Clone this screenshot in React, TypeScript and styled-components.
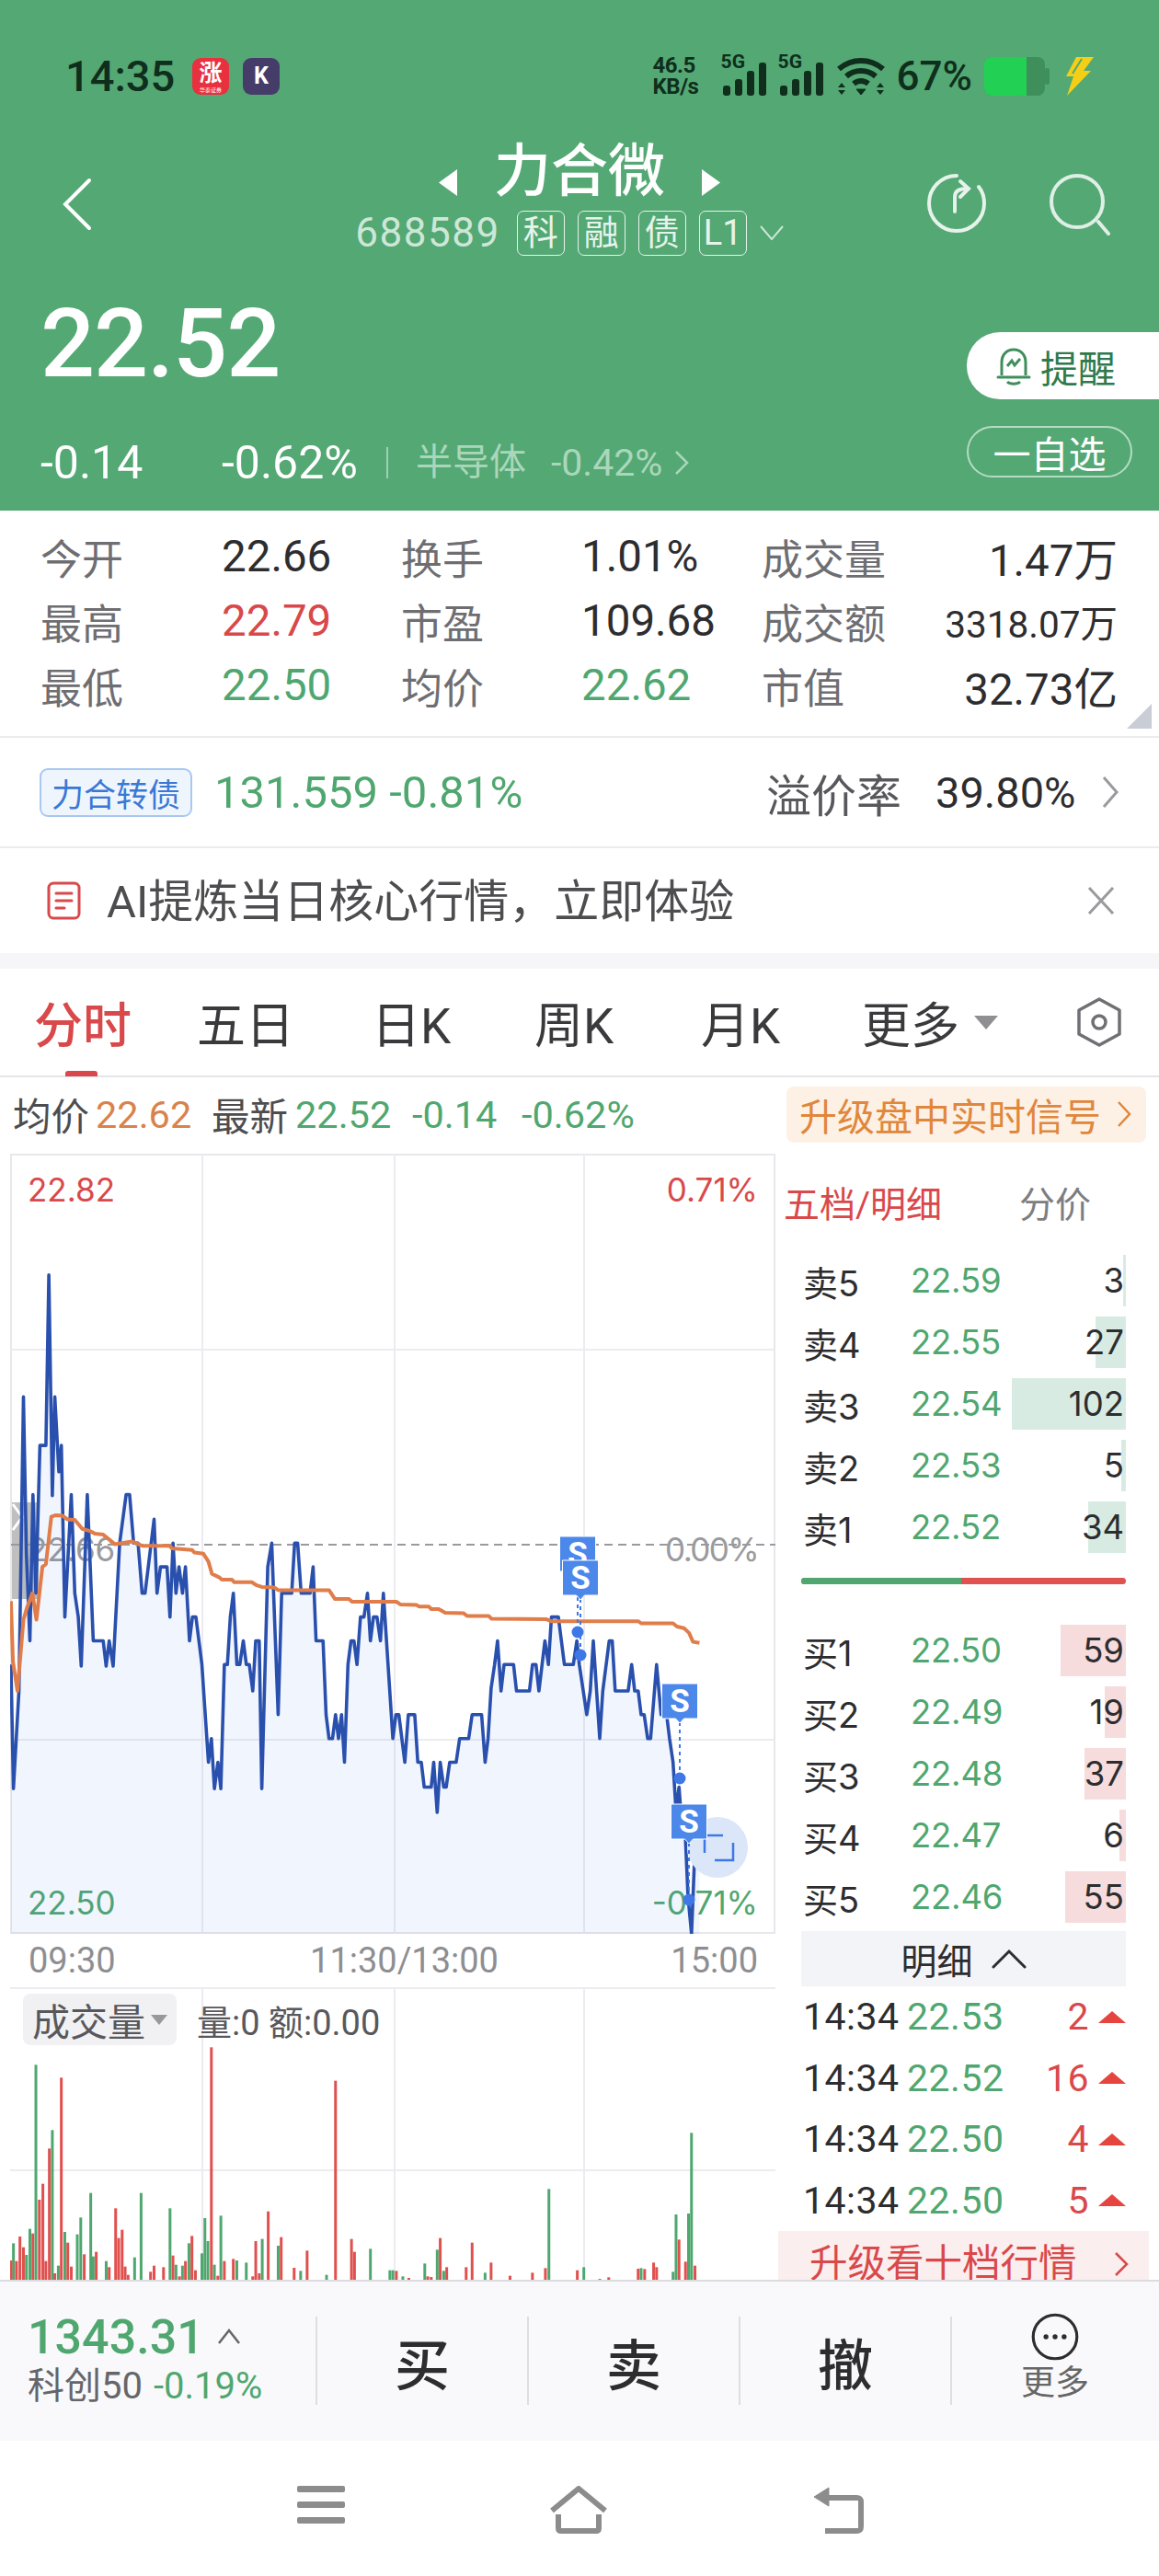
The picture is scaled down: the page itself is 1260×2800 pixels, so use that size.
import styled, { createGlobalStyle } from "styled-components";

const GREEN = "#4fa76f";
const RED = "#d9484a";
const CJK = `"Noto Sans CJK SC"`;

const GlobalStyle = createGlobalStyle`
  html, body {
    margin: 0;
    padding: 0;
    background: #fff;
  }
  * {
    box-sizing: border-box;
  }
`;

const Page = styled.div`
  display: flex;
  flex-direction: column;
  width: 1260px;
  height: 2800px;
  overflow: hidden;
  font-family: Roboto, ${CJK}, sans-serif;
  color: #2d2d2f;
`;

/* ---------- header ---------- */
const Header = styled.header`
  display: flex;
  flex-direction: column;
  height: 555px;
  background: #54a874;
  color: #fff;
`;

const StatusBar = styled.div`
  display: flex;
  align-items: center;
  justify-content: space-between;
  height: 42px;
  margin-top: 62px;
  padding: 0 70px 0 71px;
  color: #0f2e1c;
`;

const StatusGroup = styled.div`
  display: flex;
  align-items: center;
`;

const Clock = styled.span`
  width: 138px;
  font-size: 47px;
  font-weight: 500;
  line-height: 42px;
`;

const AppBadge = styled.div<{ $bg: string }>`
  display: flex;
  flex-direction: column;
  align-items: center;
  justify-content: center;
  width: 40px;
  height: 40px;
  margin-right: 15px;
  border-radius: 9px;
  background: ${(p) => p.$bg};
  color: #fff;
  font-size: 25px;
  font-weight: 700;
  line-height: 28px;
  small {
    font-size: 6px;
    font-weight: 400;
    line-height: 7px;
  }
`;

const NetSpeed = styled.div`
  width: 75px;
  font-size: 24px;
  font-weight: 700;
  line-height: 23px;
  letter-spacing: -0.5px;
  text-align: left;
`;

const SignalWrap = styled.div`
  position: relative;
  width: 62px;
  height: 42px;
  span {
    position: absolute;
    top: -5px;
    left: -1px;
    font-size: 21px;
    font-weight: 700;
    line-height: 20px;
  }
`;

const Percent = styled.span`
  margin: 0 13px 0 12px;
  font-size: 44px;
  font-weight: 500;
  line-height: 42px;
`;

const TitleBar = styled.div`
  display: grid;
  grid-template-columns: 1fr auto 1fr;
  align-items: center;
  height: 130px;
  margin-top: 47px;
  padding: 0 60px;
`;

const BackIcon = styled.svg`
  margin: 12px 0 0 8px;
`;

const TitleCenter = styled.div`
  display: flex;
  flex-direction: column;
  align-items: center;
`;

const NameRow = styled.div`
  display: flex;
  align-items: center;
  gap: 40px;
  height: 66px;
  margin-bottom: 8px;
  svg {
    margin-top: 22px;
  }
`;

const Name = styled.h1`
  margin: 0;
  font-size: 62px;
  font-weight: 500;
  line-height: 66px;
`;

const CodeRow = styled.div`
  display: flex;
  align-items: center;
  gap: 14px;
  padding-right: 22px;
`;

const Code = styled.span`
  margin-right: 4px;
  color: #cde7d7;
  font-size: 44px;
  letter-spacing: 1.5px;
  line-height: 50px;
`;

const Tag = styled.span`
  display: flex;
  align-items: center;
  justify-content: center;
  width: 52px;
  height: 49px;
  border: 1.5px solid #e6f3eb;
  border-radius: 7px;
  color: #e6f3eb;
  font-size: 38px;
  line-height: 1;
`;

const TitleActions = styled.div`
  display: flex;
  justify-content: flex-end;
  gap: 66px;
  margin: 12px -8px 0 0;
`;

const PriceArea = styled.div`
  display: flex;
  justify-content: space-between;
  margin-top: 41px;
`;

const PriceCol = styled.div`
  padding-left: 44px;
`;

const BigPrice = styled.div`
  font-size: 104px;
  font-weight: 500;
  line-height: 104px;
  letter-spacing: -1px;
`;

const ChangeRow = styled.div`
  display: flex;
  align-items: center;
  height: 40px;
  margin-top: 57px;
`;

const Change = styled.span<{ $w: number }>`
  width: ${(p) => p.$w}px;
  font-size: 50px;
  line-height: 40px;
`;

const ChangeSep = styled.span`
  width: 2px;
  height: 34px;
  margin: 0 30px 0 0;
  background: #9fd0b3;
`;

const SectorName = styled.span`
  width: 147px;
  color: #aad7bb;
  font-size: 40px;
  line-height: 40px;
`;

const SectorChange = styled.span`
  width: 134px;
  color: #aad7bb;
  font-size: 41px;
  line-height: 40px;
`;

const PillCol = styled.div`
  display: flex;
  flex-direction: column;
  align-items: flex-end;
  gap: 29px;
  margin-top: 39px;
`;

const AlertPill = styled.div`
  display: flex;
  align-items: center;
  gap: 10px;
  width: 209px;
  height: 73px;
  padding-left: 32px;
  border-radius: 36px 0 0 36px;
  background: #fff;
  color: #2f7a4c;
  font-size: 41px;
`;

const WatchPill = styled.div`
  display: flex;
  align-items: center;
  justify-content: center;
  width: 180px;
  height: 56px;
  margin-right: 29px;
  border: 2px solid #b4dcc4;
  border-radius: 28px;
  color: #fff;
  font-size: 41px;
`;

/* ---------- stats ---------- */
const Stats = styled.section`
  position: relative;
  height: 247px;
  padding: 15px 45px 0 44px;
  border-bottom: 2px solid #ececef;
`;

const StatRow = styled.div`
  display: grid;
  grid-template-columns: 197px 195px 196px 196px auto 1fr;
  align-items: center;
  height: 70px;
`;

const StatLabel = styled.span`
  color: #6e6e72;
  font-size: 45px;
`;

const StatValue = styled.span<{ $color?: string; $size?: number; $right?: boolean }>`
  color: ${(p) => p.$color ?? "#2d2d2f"};
  font-size: ${(p) => p.$size ?? 47.5}px;
  text-align: ${(p) => (p.$right ? "right" : "left")};
`;

const Corner = styled.div`
  position: absolute;
  right: 8px;
  bottom: 8px;
  width: 0;
  height: 0;
  border-left: 27px solid transparent;
  border-bottom: 27px solid #c8cdd6;
`;

const BondRow = styled.section`
  display: flex;
  align-items: center;
  height: 120px;
  padding: 0 44px 0 43px;
  border-bottom: 2px solid #ececef;
`;

const BondChip = styled.span`
  display: flex;
  align-items: center;
  justify-content: center;
  width: 166px;
  height: 53px;
  margin-right: 24px;
  border: 2px solid #a9c8ef;
  border-radius: 9px;
  background: #eff5fd;
  color: #3a78d6;
  font-size: 35px;
`;

const BondQuote = styled.span`
  flex: 1;
  color: ${GREEN};
  font-size: 49px;
`;

const PremiumLabel = styled.span`
  width: 184px;
  color: #58585c;
  font-size: 49px;
`;

const PremiumValue = styled.span`
  width: 181px;
  font-size: 47px;
`;

const AiRow = styled.section`
  display: flex;
  align-items: center;
  height: 131px;
  padding: 0 48px 0 51px;
  border-bottom: 17px solid #f6f6f8;
  color: #4d4d50;
  font-size: 49px;
  span {
    flex: 1;
    margin: 0 0 8px 28px;
  }
`;

/* ---------- tabs ---------- */
const Tabs = styled.nav`
  position: relative;
  display: flex;
  align-items: center;
  height: 118px;
  padding-left: 37px;
  border-bottom: 2px solid #e5e5e8;
`;

const Tab = styled.span<{ $w: number; $active?: boolean }>`
  width: ${(p) => p.$w}px;
  color: ${(p) => (p.$active ? RED : "#3a3a3c")};
  font-size: 53px;
  font-weight: ${(p) => (p.$active ? 500 : 400)};
`;

const TabMark = styled.i`
  position: absolute;
  left: 71px;
  bottom: -1px;
  width: 35px;
  height: 6px;
  border-radius: 3px 3px 0 0;
  background: ${RED};
`;

const TabCaret = styled.i`
  width: 0;
  height: 0;
  margin: 0 85px 0 9px;
  border-left: 13px solid transparent;
  border-right: 13px solid transparent;
  border-top: 15px solid #8f8f93;
`;

const InfoRow = styled.div`
  display: flex;
  align-items: center;
  height: 83px;
  padding: 0 14px 3px 14px;
  font-size: 41.5px;
`;

const InfoItem = styled.span<{ $w: number; $color?: string }>`
  width: ${(p) => p.$w}px;
  color: ${(p) => p.$color ?? "#4d4d50"};
`;

const SignalChip = styled.div`
  display: flex;
  align-items: center;
  justify-content: space-between;
  width: 391px;
  height: 61px;
  margin-left: auto;
  padding: 0 16px 0 14px;
  border-radius: 8px;
  background: #fdf1e6;
  color: #e0873b;
  font-size: 41px;
`;

/* ---------- chart ---------- */
const ChartArea = styled.div`
  display: flex;
  height: 1224px;
  overflow: hidden;
`;

const ChartCol = styled.div`
  width: 846px;
  padding-left: 11px;
`;

const PricePanel = styled.div`
  position: relative;
  width: 832px;
  height: 848px;
  svg {
    position: absolute;
    left: 0;
    top: 0;
  }
`;

const ChartLabel = styled.span<{ $color: string; $side: "left" | "right"; $top: number; $tight?: boolean }>`
  position: absolute;
  top: ${(p) => p.$top}px;
  ${(p) => p.$side}: 19px;
  color: ${(p) => p.$color};
  font-family: Inter, sans-serif;
  font-size: 35px;
  letter-spacing: ${(p) => (p.$tight ? "-1.6px" : "0")};
  line-height: 40px;
`;

const Handle = styled.div`
  position: absolute;
  left: 1px;
  top: 379px;
  display: flex;
  align-items: center;
  justify-content: center;
  width: 30px;
  height: 105px;
  background: rgba(112, 112, 112, 0.45);
`;

const TimeAxis = styled.div`
  display: flex;
  align-items: center;
  justify-content: space-between;
  width: 832px;
  height: 58px;
  padding: 0 19px 0 20px;
  color: #8e8e92;
  font-size: 38px;
  span:nth-child(2) {
    margin-left: 24px;
  }
`;

const VolumePanel = styled.div`
  position: relative;
  width: 832px;
  height: 318px;
  svg {
    display: block;
  }
`;

const VolumeHead = styled.div`
  position: absolute;
  left: 14px;
  top: 7px;
  display: flex;
  align-items: center;
  gap: 22px;
  color: #58585c;
  font-size: 38px;
`;

const VolumeChip = styled.span`
  display: flex;
  align-items: center;
  gap: 6px;
  height: 56px;
  padding: 0 10px;
  border-radius: 8px;
  background: #f1f1f3;
  font-size: 41px;
  i {
    width: 0;
    height: 0;
    border-left: 9px solid transparent;
    border-right: 9px solid transparent;
    border-top: 11px solid #98989c;
  }
`;

/* ---------- order book ---------- */
const BookCol = styled.aside`
  position: relative;
  flex: 1;
  overflow: hidden;
`;

const BookHead = styled.div`
  display: flex;
  align-items: center;
  height: 110px;
  padding: 0 0 6px 6px;
  font-size: 39px;
  b {
    width: 256px;
    color: ${RED};
    font-weight: 400;
  }
  span {
    color: #7d7d81;
  }
`;

const BookRow = styled.div`
  position: relative;
  display: flex;
  align-items: center;
  width: 353px;
  height: 56px;
  margin: 0 0 11px 25px;
  padding-left: 2px;
  font-family: Inter, sans-serif;
  font-size: 36.5px;
`;

const RowLabel = styled.span`
  position: relative;
  width: 117px;
  font-family: Inter, ${CJK}, sans-serif;
  font-size: 38px;
`;

const RowPrice = styled.span`
  position: relative;
  flex: 1;
  color: ${GREEN};
  letter-spacing: -0.2px;
`;

const RowQty = styled.span`
  position: relative;
  padding-right: 2px;
`;

const DepthBar = styled.i<{ $w: number; $side: "buy" | "sell" }>`
  position: absolute;
  right: 0;
  top: 0;
  bottom: 0;
  width: ${(p) => p.$w}px;
  background: ${(p) => (p.$side === "sell" ? "#d8ebe2" : "#f6dcdd")};
`;

const SplitBar = styled.div`
  display: flex;
  width: 353px;
  height: 7px;
  margin: 27px 0 44px 25px;
  overflow: hidden;
  border-radius: 4px;
  background: #e0524f;
  &::before {
    content: "";
    width: 174px;
    background: ${GREEN};
  }
`;

const DetailHead = styled.div`
  display: flex;
  align-items: center;
  justify-content: center;
  gap: 20px;
  width: 353px;
  height: 60px;
  margin: -2px 0 0 25px;
  background: #f3f4f8;
  font-size: 39px;
`;

const DetailRow = styled.div`
  display: flex;
  align-items: center;
  width: 353px;
  height: 66.5px;
  margin-left: 25px;
  padding-left: 2px;
  font-size: 41px;
  letter-spacing: 0.5px;
`;

const DetailTime = styled.span`
  width: 113px;
`;

const DetailPrice = styled.span`
  flex: 1;
  color: ${GREEN};
`;

const DetailQty = styled.span`
  color: ${RED};
`;

const UpTriangle = styled.i`
  width: 0;
  height: 0;
  margin-left: 10px;
  border-left: 15px solid transparent;
  border-right: 15px solid transparent;
  border-bottom: 13px solid #e6453f;
`;

const UpgradeBar = styled.div`
  display: flex;
  justify-content: space-between;
  width: 403px;
  height: 60px;
  padding: 10px 22px 0 34px;
  background: #fbeeee;
  color: ${RED};
  font-size: 41.5px;
  line-height: 52px;
  svg {
    margin-top: 12px;
  }
`;

/* ---------- bottom ---------- */
const TradeBar = styled.div`
  display: flex;
  align-items: flex-start;
  height: 175px;
  padding-top: 38px;
  border-top: 2px solid #dcdce0;
  background: #f9f9fb;
`;

const IndexBox = styled.div`
  width: 343px;
  padding-left: 30px;
`;

const IndexTop = styled.div`
  display: flex;
  align-items: center;
  gap: 14px;
  height: 44px;
  color: ${GREEN};
  font-size: 52px;
  font-weight: 500;
`;

const IndexBottom = styled.div`
  margin-top: 10px;
  color: #66666a;
  font-size: 40px;
  line-height: 44px;
  span {
    margin-left: 12px;
    color: ${GREEN};
  }
`;

const TradeCell = styled.div`
  display: flex;
  flex-direction: column;
  align-items: center;
  justify-content: center;
  width: 230px;
  height: 96px;
  border-left: 2px solid #dedee2;
  font-size: 60px;
  font-weight: 500;
`;

const MoreCell = styled(TradeCell)`
  justify-content: flex-start;
  width: 226px;
  color: #666;
  font-size: 37px;
  font-weight: 400;
  line-height: 46px;
  svg {
    margin-top: -4px;
  }
  span {
    margin-top: 2px;
  }
`;

const NavBar = styled.div`
  display: flex;
  flex: 1;
  align-items: flex-start;
  justify-content: center;
  gap: 222px;
  padding: 49px 0 0 2px;
  svg {
    display: block;
  }
`;

/* ---------- data, read off the reference at zoom scale ---------- */
const zx = (x: number) => x / 1.845;
const zy = (y: number) => 1240 + y / 1.742;

const blueRaw = `22,990 27,1225 38,1040 47,483 53,780 60,945 66,668 72,855 80,575 92,575 98,252 105,670 110,483 118,625 123,575 130,900 143,668 150,855 157,900 163,993 175,668 187,945 207,945 213,993 219,945 227,993 240,760 253,668 260,668 268,760 277,760 285,855 291,855 309,715 315,855 322,805 335,805 341,900 347,760 353,855 359,805 366,855 372,805 380,945 386,900 393,900 405,990 418,1175 424,1130 430,1225 437,1175 443,1225 450,990 456,990 462,900 468,855 475,990 481,990 488,945 494,990 500,990 507,1040 513,945 520,945 525,1225 537,805 545,760 558,1085 565,855 585,855 591,760 597,760 604,855 622,855 628,805 634,945 648,945 654,1085 660,1130 667,1130 673,1085 679,1130 685,1085 691,1175 698,990 704,945 710,945 716,990 723,900 730,900 737,855 743,945 749,900 756,900 763,945 769,855 788,1130 794,1085 800,1085 812,1175 819,1085 832,1085 838,1175 845,1175 851,1222 865,1222 870,1175 877,1270 883,1175 890,1222 895,1222 902,1175 915,1175 922,1130 940,1130 947,1085 966,1085 973,1175 979,1130 985,1035 992,990 998,945 1005,1040 1011,990 1030,990 1036,1040 1062,1040 1068,990 1075,990 1081,1040 1093,945 1100,990 1106,900 1120,900 1132,990 1150,990 1157,945 1162,990 1177,1085 1184,1040 1190,945 1203,1130 1209,1040 1222,945 1228,945 1234,1040 1260,1040 1267,990 1273,1040 1280,1040 1286,1085 1292,1085 1299,1130 1305,1130 1317,990 1326,1085 1337,1085 1343,1130 1350,1175 1356,1270 1362,1222 1368,1300 1374,1300 1380,1430 1387,1500 1393,1360 1403,1360`;

const orangeRaw = `22,870 26,985 35,1040 47,905 55,880 65,855 73,905 85,805 92,800 103,710 112,707 125,708 135,715 150,716 165,733 180,737 190,742 207,744 215,750 230,762 245,760 265,757 285,765 340,765 345,770 385,773 390,778 408,780 418,795 425,818 440,825 445,829 465,829 470,834 505,834 515,840 525,843 550,844 558,849 660,849 672,866 700,866 706,871 795,871 803,876 835,877 840,880 860,880 865,885 880,885 893,892 930,893 937,898 980,898 986,903 1095,904 1105,908 1280,908 1286,912 1350,912 1358,918 1372,921 1382,930 1390,947 1403,949`;

const toPoints = (raw: string) =>
  raw
    .split(" ")
    .map((p) => {
      const [x, y] = p.split(",").map(Number);
      return `${zx(x).toFixed(1)},${zy(y).toFixed(1)}`;
    })
    .join(" ");

const bluePoints = toPoints(blueRaw);
const orangePoints = toPoints(orangeRaw);
const areaPoints = `${zx(22)},2101 ${bluePoints} ${zx(1403)},2101`;

// color, zoom x, zoom top
const bars: [string, number, number][] = [
  ["g",27,1012],["r",22,1068],["r",33,1070],["r",40,990],["r",47,1025],["g",53,1050],["g",60,965],["r",66,980],["g",72,430],["r",79,870],["r",86,818],["r",92,1070],["r",99,703],["g",105,643],["r",110,1110],["g",117,1085],["r",123,472],["g",130,975],["r",136,1010],["r",143,1088],["g",155,983],["g",162,928],["r",169,1048],["g",182,848],["r",193,1040],["g",187,1055],["g",213,1070],["r",219,1090],["r",232,898],["r",238,995],["r",245,968],["r",251,1088],["r",257,1115],["g",270,1058],["g",283,848],["r",302,1105],["r",309,1085],["r",328,1090],["g",341,898],["r",347,1052],["g",353,1082],["r",360,1120],["g",366,1085],["r",372,1070],["g",379,1012],["r",385,988],["r",392,1100],["g",405,1045],["g",411,930],["g",417,1005],["r",424,373],["g",430,1082],["r",437,1118],["g",443,922],["r",450,1070],["r",468,1063],["g",475,1068],["g",494,1075],["r",507,1120],["r",513,1005],["r",520,1110],["g",526,998],["g",558,1020],["r",538,908],["r",564,992],["r",590,1092],["g",603,1102],["r",616,1036],["g",655,1115],["r",673,482],["r",705,998],["r",711,1040],["g",743,1030],["g",782,1100],["g",788,1100],["r",795,1102],["g",808,1120],["r",820,1125],["g",852,1078],["r",858,1120],["r",865,1122],["g",877,1033],["r",883,995],["g",890,1102],["r",896,1090],["r",935,1090],["r",947,1010],["g",973,1108],["r",985,1075],["r",1023,1118],["r",1068,1108],["r",1094,1093],["g",1101,835],["r",1158,1100],["g",1171,1090],["g",1203,1128],["r",1221,1123],["r",1280,1095],["g",1286,1093],["r",1293,1096],["r",1311,1075],["r",1317,1090],["g",1350,1105],["g",1356,918],["r",1362,1000],["r",1375,1072],["g",1381,915],["g",1387,652],["r",1394,1085],
];

const sells = [
  { n: "卖5", p: "22.59", q: "3", w: 3 },
  { n: "卖4", p: "22.55", q: "27", w: 33 },
  { n: "卖3", p: "22.54", q: "102", w: 124 },
  { n: "卖2", p: "22.53", q: "5", w: 5 },
  { n: "卖1", p: "22.52", q: "34", w: 41 },
];

const buys = [
  { n: "买1", p: "22.50", q: "59", w: 71 },
  { n: "买2", p: "22.49", q: "19", w: 23 },
  { n: "买3", p: "22.48", q: "37", w: 45 },
  { n: "买4", p: "22.47", q: "6", w: 7 },
  { n: "买5", p: "22.46", q: "55", w: 66 },
];

const details = [
  { p: "22.53", q: "2" },
  { p: "22.52", q: "16" },
  { p: "22.50", q: "4" },
  { p: "22.50", q: "5" },
];

const stats = [
  ["今开", "22.66", "", "换手", "1.01%", "", "成交量", "1.47万", 47.5],
  ["最高", "22.79", RED, "市盈", "109.68", "", "成交额", "3318.07万", 40.5],
  ["最低", "22.50", GREEN, "均价", "22.62", GREEN, "市值", "32.73亿", 47.5],
] as const;

/* ---------- little drawings ---------- */
function Signal() {
  return (
    <SignalWrap>
      <span>5G</span>
      <svg width="50" height="42" viewBox="0 0 50 42" fill="#0f2e1c">
        <rect x="1" y="31" width="8" height="11" rx="3" />
        <rect x="14" y="24" width="8" height="18" rx="3" />
        <rect x="27" y="15" width="8" height="27" rx="3" />
        <rect x="40" y="6" width="8" height="36" rx="3" />
      </svg>
    </SignalWrap>
  );
}

function Wifi() {
  return (
    <svg width="54" height="42" viewBox="0 0 54 42" fill="none" stroke="#0f2e1c" strokeWidth="6">
      <path d="M3 13 C17 1 37 1 51 13" />
      <path d="M11 21 C20 13 34 13 43 21" />
      <path d="M19 29 C24 25 30 25 35 29" />
      <path d="M22 35 h10 l-5 6 z" fill="#0f2e1c" strokeWidth="1" />
      <path d="M2 33 l4 -5 l4 5 z M44 33 l4 -5 l4 5 z" fill="#0f2e1c" strokeWidth="0" />
      <path d="M2 36 l4 5 l4 -5 z M44 36 l4 5 l4 -5 z" fill="#0f2e1c" strokeWidth="0" />
    </svg>
  );
}

function Battery() {
  return (
    <svg width="120" height="42" viewBox="0 0 120 42">
      <rect x="0" y="0" width="66" height="42" rx="8" fill="#3f8f5d" />
      <rect x="0" y="0" width="46" height="42" rx="8" fill="#22d154" />
      <rect x="40" y="0" width="6" height="42" fill="#22d154" />
      <rect x="66" y="12" width="5" height="18" rx="2" fill="#3f8f5d" />
      <path d="M100 0 h19 l-11 15 h8 l-26 27 l7 -21 h-8 z" fill="#f5cf15" />
      <path d="M92 22 l-6 20 M106 2 l-10 16" stroke="#54a874" strokeWidth="2" />
    </svg>
  );
}

function Triangle({ dir }: { dir: "l" | "r" }) {
  return (
    <svg width="20" height="29" viewBox="0 0 20 29" fill="#fff">
      <path d={dir === "l" ? "M20 0 V29 L0 14.5 Z" : "M0 0 V29 L20 14.5 Z"} />
    </svg>
  );
}

function Bell() {
  return (
    <svg width="38" height="42" viewBox="0 0 38 42" fill="none" stroke="#3f8f5d" strokeWidth="3">
      <path d="M6 31 V17 C6 8 12 3 19 3 C26 3 32 8 32 17 V31" />
      <path d="M2 33 H36" strokeLinecap="round" />
      <path d="M12 38 C15 41 23 41 26 38" />
      <path d="M12 21 L17 15 L20 20 L26 13" />
    </svg>
  );
}

function SMark({ x, y, dotY }: { x: number; y: number; dotY: number }) {
  return (
    <g>
      <line x1={x} y1={y + 42} x2={x} y2={dotY} stroke="#3f78e6" strokeWidth="2" strokeDasharray="4 4" />
      <circle cx={x} cy={dotY} r="6.5" fill="#3f78e6" />
      <path
        d={`M${x - 19.5} ${y} h39 v38 h-15 l-4.5 5 l-4.5 -5 h-15 z`}
        fill="#4c87ea"
        stroke="#fff"
        strokeWidth="1"
      />
      <text x={x} y={y + 31} textAnchor="middle" fill="#fff" fontFamily="Roboto" fontWeight="700" fontSize="35">
        S
      </text>
    </g>
  );
}

function PriceChart() {
  return (
    <svg width="832" height="848" viewBox="11 1253 832 848">
      <rect x="12" y="1254" width="830" height="846" fill="none" stroke="#e8e8ec" strokeWidth="2" />
      <path d="M220 1254 V2100 M429 1254 V2100 M635 1254 V2100 M12 1466 H842 M12 1890 H842" stroke="#ececf0" strokeWidth="2" />
      <polygon points={areaPoints} fill="rgba(66,124,233,0.075)" />
      <path d="M12 1678 H843" stroke="#9a9a9e" strokeWidth="2" strokeDasharray="9 6" />
      <polyline points={bluePoints} fill="none" stroke="#2a50ae" strokeWidth="3.6" strokeLinejoin="round" />
      <polyline points={orangePoints} fill="none" stroke="#e07d4a" strokeWidth="4" strokeLinejoin="round" />
      <SMark x={628} y={1669} dotY={1773} />
      <SMark x={631} y={1695} dotY={1798} />
      <circle cx="780" cy="2007" r="33" fill="#dbe6f9" />
      <path d="M766 2013 V1994 H786 M797 2002 V2021 H777" fill="none" stroke="#3f78e6" strokeWidth="2.5" />
      <SMark x={739} y={1829} dotY={1932} />
      <SMark x={749} y={1960} dotY={2064} />
    </svg>
  );
}

function VolumeChart() {
  return (
    <svg width="832" height="318" viewBox="11 2159 832 318">
      <path d="M11 2160 H843 M11 2358 H843" stroke="#ececf0" strokeWidth="2" />
      <path d="M220 2160 V2477 M429 2160 V2477 M635 2160 V2477" stroke="#ececf0" strokeWidth="2" />
      {bars.map(([c, x, top], i) => {
        const y = 2100 + top / 3;
        return (
          <rect
            key={i}
            x={x / 1.845 - 1.5}
            y={y}
            width="3"
            height={2477 - y}
            fill={c === "g" ? GREEN : "#e0504e"}
          />
        );
      })}
    </svg>
  );
}

function App() {
  return (
    <Page>
      <GlobalStyle />
      <Header>
        <StatusBar>
          <StatusGroup>
            <Clock>14:35</Clock>
            <AppBadge $bg="#e8303f">
              涨<small>华泰证券</small>
            </AppBadge>
            <AppBadge $bg="#463c6a">K</AppBadge>
          </StatusGroup>
          <StatusGroup>
            <NetSpeed>
              46.5
              <br />
              KB/s
            </NetSpeed>
            <Signal />
            <Signal />
            <Wifi />
            <Percent>67%</Percent>
            <Battery />
          </StatusGroup>
        </StatusBar>

        <TitleBar>
          <BackIcon width="32" height="58" viewBox="0 0 32 58" fill="none" stroke="#fff" strokeWidth="4" strokeLinecap="round">
            <path d="M29 3 L3 29 L29 55" />
          </BackIcon>
          <TitleCenter>
            <NameRow>
              <Triangle dir="l" />
              <Name>力合微</Name>
              <Triangle dir="r" />
            </NameRow>
            <CodeRow>
              <Code>688589</Code>
              <Tag>科</Tag>
              <Tag>融</Tag>
              <Tag>债</Tag>
              <Tag>L1</Tag>
              <svg width="26" height="16" viewBox="0 0 26 16" fill="none" stroke="#cde7d7" strokeWidth="2">
                <path d="M1 1 L13 15 L25 1" />
              </svg>
            </CodeRow>
          </TitleCenter>
          <TitleActions>
            <svg width="66" height="66" viewBox="0 0 66 66" fill="none" stroke="#e6f3eb" strokeWidth="4" strokeLinecap="round">
              <path d="M32 3 A30 30 0 1 0 62 33 C62 26 60 20 56 15" />
              <path d="M30 42 V26 C30 20 34 17 43 17" />
              <path d="M36 9 L45 17 L36 26" />
            </svg>
            <svg width="68" height="68" viewBox="0 0 68 68" fill="none" stroke="#dfefe6" strokeWidth="4" strokeLinecap="round">
              <circle cx="31" cy="31" r="28" />
              <path d="M54 53 L65 66" />
            </svg>
          </TitleActions>
        </TitleBar>

        <PriceArea>
          <PriceCol>
            <BigPrice>22.52</BigPrice>
            <ChangeRow>
              <Change $w={197}>-0.14</Change>
              <Change $w={179}>-0.62%</Change>
              <ChangeSep />
              <SectorName>半导体</SectorName>
              <SectorChange>-0.42%</SectorChange>
              <svg width="16" height="28" viewBox="0 0 16 28" fill="none" stroke="#aad7bb" strokeWidth="2.5">
                <path d="M2 2 L14 14 L2 26" />
              </svg>
            </ChangeRow>
          </PriceCol>
          <PillCol>
            <AlertPill>
              <Bell />
              提醒
            </AlertPill>
            <WatchPill>一自选</WatchPill>
          </PillCol>
        </PriceArea>
      </Header>

      <Stats>
        {stats.map((r) => (
          <StatRow key={r[0]}>
            <StatLabel>{r[0]}</StatLabel>
            <StatValue $color={r[2] || undefined}>{r[1]}</StatValue>
            <StatLabel>{r[3]}</StatLabel>
            <StatValue $color={r[5] || undefined}>{r[4]}</StatValue>
            <StatLabel>{r[6]}</StatLabel>
            <StatValue $size={r[8]} $right>
              {r[7]}
            </StatValue>
          </StatRow>
        ))}
        <Corner />
      </Stats>

      <BondRow>
        <BondChip>力合转债</BondChip>
        <BondQuote>131.559 -0.81%</BondQuote>
        <PremiumLabel>溢价率</PremiumLabel>
        <PremiumValue>39.80%</PremiumValue>
        <svg width="18" height="36" viewBox="0 0 18 36" fill="none" stroke="#9a9a9e" strokeWidth="3">
          <path d="M2 2 L16 18 L2 34" />
        </svg>
      </BondRow>

      <AiRow>
        <svg width="37" height="42" viewBox="0 0 37 42" fill="none" stroke="#d9484a" strokeWidth="3" strokeLinecap="round">
          <rect x="2" y="2" width="33" height="38" rx="5" />
          <path d="M10 13 H27 M10 21 H27 M10 29 H19" />
        </svg>
        <span>AI提炼当日核心行情，立即体验</span>
        <svg width="30" height="30" viewBox="0 0 30 30" fill="none" stroke="#9a9a9e" strokeWidth="3">
          <path d="M2 1 L28 29 M28 1 L2 29" />
        </svg>
      </AiRow>

      <Tabs>
        <Tab $w={177} $active>分时</Tab>
        <Tab $w={190}>五日</Tab>
        <Tab $w={177}>日K</Tab>
        <Tab $w={181}>周K</Tab>
        <Tab $w={175}>月K</Tab>
        <Tab $w={113}>更多</Tab>
        <TabCaret />
        <svg width="50" height="54" viewBox="0 0 50 54" fill="none" stroke="#707074" strokeWidth="3.5">
          <path d="M25 2 L47 14 V40 L25 52 L3 40 V14 Z" strokeLinejoin="round" />
          <circle cx="25" cy="27" r="7" />
        </svg>
        <TabMark />
      </Tabs>

      <InfoRow>
        <InfoItem $w={90}>均价</InfoItem>
        <InfoItem $w={126} $color="#d9824a">22.62</InfoItem>
        <InfoItem $w={91}>最新</InfoItem>
        <InfoItem $w={127} $color={GREEN}>22.52</InfoItem>
        <InfoItem $w={119} $color={GREEN}>-0.14</InfoItem>
        <InfoItem $w={130} $color={GREEN}>-0.62%</InfoItem>
        <SignalChip>
          升级盘中实时信号
          <svg width="16" height="30" viewBox="0 0 16 30" fill="none" stroke="#e0873b" strokeWidth="2.5">
            <path d="M2 2 L14 15 L2 28" />
          </svg>
        </SignalChip>
      </InfoRow>

      <ChartArea>
        <ChartCol>
          <PricePanel>
            <ChartLabel $color={RED} $side="left" $top={19}>22.82</ChartLabel>
            <ChartLabel $color={RED} $side="right" $top={19}>0.71%</ChartLabel>
            <ChartLabel $color="#9a9a9e" $side="left" $top={410}>22.66</ChartLabel>
            <ChartLabel $color="#9a9a9e" $side="right" $top={410} $tight>0.00%</ChartLabel>
            <ChartLabel $color={GREEN} $side="left" $top={794}>22.50</ChartLabel>
            <ChartLabel $color={GREEN} $side="right" $top={794}>-0.71%</ChartLabel>
            <Handle>
              <svg width="14" height="32" viewBox="0 0 14 32" fill="none" stroke="#fff" strokeWidth="3">
                <path d="M2 2 L12 16 L2 30" />
              </svg>
            </Handle>
            <PriceChart />
          </PricePanel>
          <TimeAxis>
            <span>09:30</span>
            <span>11:30/13:00</span>
            <span>15:00</span>
          </TimeAxis>
          <VolumePanel>
            <VolumeChart />
            <VolumeHead>
              <VolumeChip>
                成交量
                <i />
              </VolumeChip>
              量:0 额:0.00
            </VolumeHead>
          </VolumePanel>
        </ChartCol>

        <BookCol>
          <BookHead>
            <b>五档/明细</b>
            <span>分价</span>
          </BookHead>
          {sells.map((r) => (
            <BookRow key={r.n}>
              <DepthBar $w={r.w} $side="sell" />
              <RowLabel>{r.n}</RowLabel>
              <RowPrice>{r.p}</RowPrice>
              <RowQty>{r.q}</RowQty>
            </BookRow>
          ))}
          <SplitBar />
          {buys.map((r) => (
            <BookRow key={r.n}>
              <DepthBar $w={r.w} $side="buy" />
              <RowLabel>{r.n}</RowLabel>
              <RowPrice>{r.p}</RowPrice>
              <RowQty>{r.q}</RowQty>
            </BookRow>
          ))}
          <DetailHead>
            明细
            <svg width="38" height="22" viewBox="0 0 38 22" fill="none" stroke="#2d2d2f" strokeWidth="3" strokeLinecap="round">
              <path d="M2 20 L19 3 L36 20" />
            </svg>
          </DetailHead>
          {details.map((r, i) => (
            <DetailRow key={i}>
              <DetailTime>14:34</DetailTime>
              <DetailPrice>{r.p}</DetailPrice>
              <DetailQty>{r.q}</DetailQty>
              <UpTriangle />
            </DetailRow>
          ))}
          <UpgradeBar>
            升级看十档行情
            <svg width="16" height="28" viewBox="0 0 16 28" fill="none" stroke="#d9484a" strokeWidth="2.5">
              <path d="M2 2 L14 14 L2 26" />
            </svg>
          </UpgradeBar>
        </BookCol>
      </ChartArea>

      <TradeBar>
        <IndexBox>
          <IndexTop>
            1343.31
            <svg width="26" height="18" viewBox="0 0 26 18" fill="none" stroke="#66666a" strokeWidth="2.5">
              <path d="M2 16 L13 2 L24 16" />
            </svg>
          </IndexTop>
          <IndexBottom>
            科创50<span>-0.19%</span>
          </IndexBottom>
        </IndexBox>
        <TradeCell>买</TradeCell>
        <TradeCell>卖</TradeCell>
        <TradeCell>撤</TradeCell>
        <MoreCell>
          <svg width="58" height="58" viewBox="0 0 58 58">
            <circle cx="29" cy="29" r="26.5" fill="none" stroke="#2d2d2f" strokeWidth="3.5" />
            <circle cx="18" cy="29" r="3" fill="#2d2d2f" />
            <circle cx="29" cy="29" r="3" fill="#2d2d2f" />
            <circle cx="40" cy="29" r="3" fill="#2d2d2f" />
          </svg>
          <span>更多</span>
        </MoreCell>
      </TradeBar>

      <NavBar>
        <svg width="52" height="42" viewBox="0 0 52 42" fill="#8c8c8c">
          <rect x="0" y="0" width="52" height="7" rx="2" />
          <rect x="0" y="17" width="52" height="7" rx="2" />
          <rect x="0" y="34" width="52" height="7" rx="2" />
        </svg>
        <svg width="64" height="52" viewBox="0 0 64 52" fill="none" stroke="#8c8c8c" strokeWidth="6" strokeLinejoin="round">
          <path d="M3 27 L32 3 L61 27" />
          <path d="M10 31 V46 C10 48 11 49 13 49 H51 C53 49 54 48 54 46 V31" />
        </svg>
        <svg width="56" height="52" viewBox="0 0 56 52" fill="none" stroke="#8c8c8c" strokeWidth="6" strokeLinejoin="round">
          <path d="M12 13 H48 C52 13 53 14 53 18 V44 C53 48 52 49 48 49 H14" />
          <path d="M18 2 V22 L2 12 Z" fill="#8c8c8c" strokeWidth="1" />
        </svg>
      </NavBar>
    </Page>
  );
}

export default App;
